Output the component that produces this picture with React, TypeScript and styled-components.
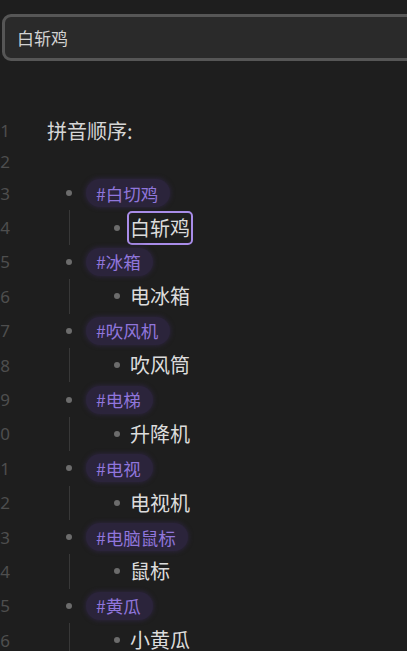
import React from "react";
import styled, { createGlobalStyle } from "styled-components";

const Global = createGlobalStyle`
  html, body { margin: 0; padding: 0; background: #1e1e1e; overflow: hidden; }
  body { width: 407px; height: 651px; font-family: "Noto Sans CJK SC", "Noto Sans", sans-serif; }
`;

const Page = styled.div`
  width: 407px;
  height: 651px;
  overflow: hidden;
  background: #1e1e1e;
  padding-top: 14px;
  box-sizing: border-box;
`;

const Search = styled.div`
  margin-left: 2px;
  width: 440px;
  height: 47px;
  box-sizing: border-box;
  border: 3px solid #565656;
  border-radius: 9px;
  background: #2a2a2a;
  display: flex;
  align-items: center;
  padding-left: 12px;
  color: #d2d2d2;
  font-size: 17px;
`;

const Editor = styled.div`
  margin-top: 52px;
  display: flex;
  flex-direction: column;
`;

const Row = styled.div<{ $h: number }>`
  display: flex;
  align-items: center;
  height: ${(p) => p.$h}px;
`;

const Gutter = styled.div`
  width: 10px;
  flex: none;
  display: flex;
  justify-content: flex-end;
  color: #4e4e4e;
  font-family: "Noto Sans", sans-serif;
  font-size: 17px;
  white-space: nowrap;
`;

const Plain = styled.div`
  margin-left: 37px;
  color: #d6d6d6;
  font-size: 20px;
`;

const BulletCell = styled.div<{ $ml: number }>`
  width: 14px;
  flex: none;
  margin-left: ${(p) => p.$ml}px;
  display: flex;
  justify-content: center;
  &::before {
    content: "";
    width: 6px;
    height: 6px;
    border-radius: 50%;
    background: #6c6c6c;
  }
`;

const Guide = styled.div`
  width: 14px;
  flex: none;
  margin-left: 52px;
  align-self: stretch;
  display: flex;
  justify-content: center;
  &::before {
    content: "";
    width: 1px;
    background: #383838;
  }
`;

const Tag = styled.div`
  margin-left: 10px;
  height: 28px;
  border-radius: 14px;
  background: #2b243b;
  box-shadow: 0 0 4px 1px #2b243b;
  color: #9076dc;
  font-size: 17.5px;
  display: flex;
  align-items: center;
  padding: 0 12px 0 10px;
`;

const Item = styled.div<{ $sel?: boolean }>`
  margin-left: 3px;
  border: 2px solid ${(p) => (p.$sel ? "#a88ce8" : "transparent")};
  border-radius: 5px;
  padding: 1px 1px 2px 1px;
  color: #dcdcdc;
  font-size: 20px;
  line-height: 27px;
`;

const pairs: [string, string][] = [
  ["白切鸡", "白斩鸡"],
  ["冰箱", "电冰箱"],
  ["吹风机", "吹风筒"],
  ["电梯", "升降机"],
  ["电视", "电视机"],
  ["电脑鼠标", "鼠标"],
  ["黄瓜", "小黄瓜"],
];

export default function App() {
  const H = 34.4;
  return (
    <Page>
      <Global />
      <Search>白斩鸡</Search>
      <Editor>
        <Row $h={34}>
          <Gutter>1</Gutter>
          <Plain>拼音顺序:</Plain>
        </Row>
        <Row $h={29}>
          <Gutter>2</Gutter>
        </Row>
        {pairs.map(([tag, item], i) => (
          <React.Fragment key={tag}>
            <Row $h={H}>
              <Gutter>{3 + i * 2}</Gutter>
              <BulletCell $ml={52} />
              <Tag>#{tag}</Tag>
            </Row>
            <Row $h={H}>
              <Gutter>{4 + i * 2}</Gutter>
              <Guide />
              <BulletCell $ml={34} />
              <Item $sel={i === 0}>{item}</Item>
            </Row>
          </React.Fragment>
        ))}
      </Editor>
    </Page>
  );
}
